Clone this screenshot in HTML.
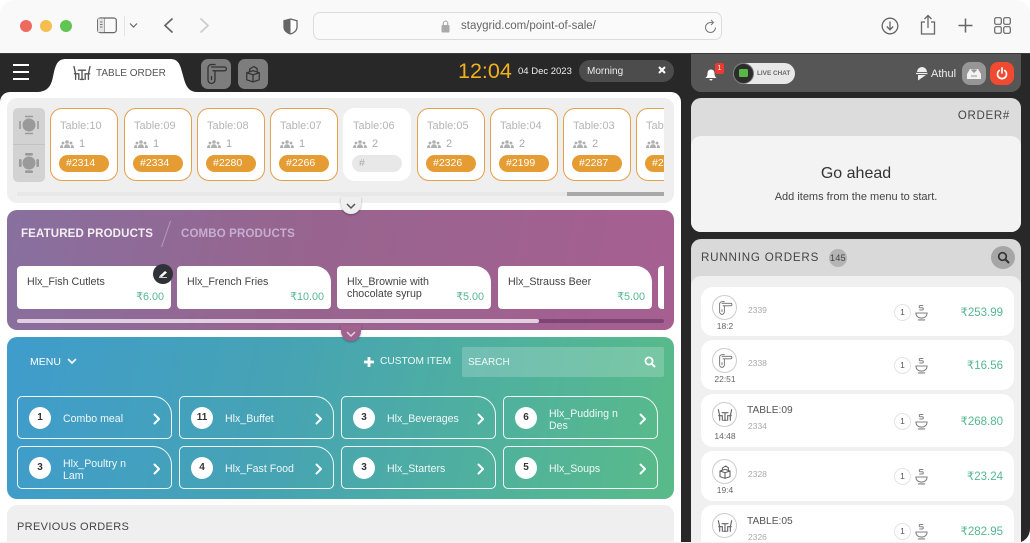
<!DOCTYPE html>
<html><head><meta charset="utf-8"><title>StayGrid POS</title>
<style>
*{box-sizing:border-box;margin:0;padding:0}
html,body{width:1030px;height:543px;overflow:hidden;background:#fff}
body{font-family:"Liberation Sans",sans-serif;position:relative;color:#333}
.a{position:absolute}
.t{position:absolute;white-space:nowrap}
.card{position:absolute;top:108px;width:68px;height:73px;background:#fff;border:1px solid #e4a04a;border-radius:12px}
.card.off{border-color:#fff}
.card .n{position:absolute;left:9px;top:11px;font-size:11px;color:#b5b5b5}
.card .c{position:absolute;left:28px;top:29px;font-size:11px;color:#aaa}
.card svg{position:absolute;left:9px;top:31px}
.card .p{position:absolute;left:8px;top:46px;width:50px;height:17px;border-radius:9px;background:#e59c33;color:#fff;font-size:10.5px;line-height:17px;padding-left:7px}
.card.off .p{background:#e8e8e8;color:#aaa}
.pc{position:absolute;top:266px;height:43px;width:154px;background:#fff;border-radius:4px 16px 4px 4px;font-size:10.7px;color:#444;line-height:12px}
.pc span{position:absolute;left:10px;top:10px}
.pc b{position:absolute;right:7px;top:25px;font-weight:400;font-size:10.8px;color:#55b791}
.m{position:absolute;width:155px;height:43px;border:1.5px solid #f0faf8;border-radius:5px 19px 5px 5px;color:#eef;font-size:10.6px;line-height:12px}
.m i{position:absolute;left:11px;top:10px;width:22px;height:22px;border-radius:50%;background:#fff;color:#333;font:700 10px/22px "Liberation Sans",sans-serif;text-align:center}
.m span{position:absolute;left:45px;top:16px;color:#f0f8f8;white-space:nowrap}
.m span.two{top:10.500px}
.m svg{position:absolute;right:10px;top:16px}
.row{position:absolute;left:701px;width:313px;background:#fff;border-radius:12px}
.row .ic{position:absolute;left:11px;top:8px;width:25px;height:25px;border:1px solid #ccc;border-radius:50%;background:#fff}
.row .ic svg{position:absolute;left:4px;top:4px}
.row .tm{position:absolute;left:0;width:48px;text-align:center;top:34px;font-size:8.5px;color:#666}
.row .id{position:absolute;left:47px;font-size:8.5px;color:#aaa}
.row .nm{position:absolute;left:46px;font-size:10.2px;color:#555}
.row .q{position:absolute;left:193px;width:17px;height:17px;border:1px solid #e4e4e4;border-radius:50%;font-size:8.5px;line-height:15px;text-align:center;color:#555}
.row .bw{position:absolute;left:214px}
.row .pr{position:absolute;right:11px;font-size:11.500px;color:#55b791}
</style></head><body>
<svg width="0" height="0" style="position:absolute">
<defs>
<symbol id="door" viewBox="0 0 24 24"><g fill="none" stroke="currentColor" stroke-width="1.300" stroke-linecap="round" stroke-linejoin="round"><path d="M4 6a3.500 3.500 0 0 1 3.500-3.500H11M4 6v12a3.500 3.500 0 0 0 7 0V9"/><path d="M7.500 5h13a1.800 1.800 0 0 1 0 3.800H9"/><path d="M7.500 14.500v3"/></g></symbol>
<symbol id="table" viewBox="0 0 24 20"><g fill="none" stroke="currentColor" stroke-width="1.700" stroke-linecap="round"><path d="M2 2l2 9v7M2.500 11H8v7"/><path d="M22 2l-2 9v7M21.500 11H16v7"/><path d="M7.500 6.500h9M12 6.500V18M10 18h4"/></g></symbol>
<symbol id="box" viewBox="0 0 24 24"><g fill="none" stroke="currentColor" stroke-width="1.500" stroke-linejoin="round"><path d="M4.500 10.500L12 8l7.500 2.500V19L12 21.500 4.500 19z"/><path d="M4.500 10.500L12 13l7.500-2.500M12 13v8.500"/><path d="M8 9V6l5-3 4 2.500V9.500"/></g></symbol>
<symbol id="bowl" viewBox="0 0 14 18"><g fill="none" stroke="#808080" stroke-width="1.100" stroke-linecap="round"><path d="M1 9.500h12c0 3.500-2.500 5.500-6 5.500S1 13 1 9.500z"/><path d="M3.500 17h7"/><path d="M8.500 1.500H5.500c-1.200 0-1.200 2.400 0 2.400h2.500c1.200 0 1.200 2.400 0 2.400H5"/></g></symbol>
<symbol id="ppl" viewBox="0 0 14 8"><g fill="#b0b0b0"><circle cx="7" cy="2" r="1.800"/><circle cx="3" cy="3" r="1.400"/><circle cx="11" cy="3" r="1.400"/><path d="M4 8c0-2.500 1-3.800 3-3.800S10 5.500 10 8zM0 8c0-2 1-3.200 2.500-3.200L3.500 8zM14 8c0-2-1-3.200-2.500-3.200L10.500 8z"/></g></symbol>
<symbol id="chev" viewBox="0 0 8 12"><path d="M1.500 1.500L6 6l-4.500 4.500" fill="none" stroke="#fff" stroke-width="2" stroke-linecap="round" stroke-linejoin="round"/></symbol>
</defs></svg>

<!-- browser chrome -->
<div class="a" style="left:0;top:0;width:1030px;height:54px;background:#f9f9f9;border-radius:14px 14px 0 0"></div>
<div class="a" style="left:20px;top:20px;width:12px;height:12px;border-radius:50%;background:#ec6a5e"></div>
<div class="a" style="left:40px;top:20px;width:12px;height:12px;border-radius:50%;background:#f4bf4f"></div>
<div class="a" style="left:60px;top:20px;width:12px;height:12px;border-radius:50%;background:#61c554"></div>
<svg class="a" style="left:97px;top:17px" width="20" height="17" viewBox="0 0 20 17"><rect x=".7" y="1" width="18.600" height="14.600" rx="2.500" fill="none" stroke="#666" stroke-width="1.200"/><path d="M7 1v14.600" stroke="#666" stroke-width="1.200"/><rect x="1" y="1.500" width="6" height="13.600" fill="#e4e4e4"/><path d="M3 5h2.500M3 7.500h2.500M3 10h2.500" stroke="#777"/></svg>
<div class="a" style="left:124px;top:16px;width:1px;height:20px;background:#e4e4e4"></div>
<svg class="a" style="left:129px;top:22px" width="9" height="7"><path d="M1 1.500l3.500 3.500L8 1.500" fill="none" stroke="#666" stroke-width="1.200"/></svg>
<svg class="a" style="left:163px;top:17px" width="11" height="17"><path d="M9.500 1.500L2 8.500l7.500 7" fill="none" stroke="#666" stroke-width="1.700"/></svg>
<svg class="a" style="left:199px;top:17px" width="11" height="17"><path d="M1.500 1.500L9 8.500l-7.500 7" fill="none" stroke="#ccc" stroke-width="1.700"/></svg>
<svg class="a" style="left:283px;top:18px" width="15" height="17"><path d="M7.500 1L14 2.800V9c0 3.500-3 6-6.500 7C4 15 1 12.500 1 9V2.800z" fill="#fff" stroke="#666" stroke-width="1.300"/><path d="M7.500 1L1 2.800V9c0 3.500 3 6 6.500 7z" fill="#666"/></svg>
<div class="a" style="left:313px;top:12px;width:409px;height:28px;background:#fafafa;border:1px solid #dcdcdc;border-radius:7px"></div>
<svg class="a" style="left:441px;top:20px" width="9" height="13"><rect x="0.500" y="5" width="8" height="7.500" rx="1" fill="#aaa"/><path d="M2.300 5V3.300a2.200 2.200 0 0 1 4.400 0V5" fill="none" stroke="#aaa" stroke-width="1.100"/></svg>
<div class="t" style="left:461px;top:20px;font-size:11.500px;color:#666">staygrid.com/point-of-sale/</div>
<svg class="a" style="left:704px;top:19px" width="13" height="15"><path d="M11.500 8.500a5 5 0 1 1-5-5h2" fill="none" stroke="#777" stroke-width="1"/><path d="M7 1l2.500 2.500L7 6" fill="none" stroke="#777" stroke-width="1"/></svg>
<svg class="a" style="left:881px;top:17px" width="18" height="18"><circle cx="9" cy="9" r="7.800" fill="none" stroke="#666" stroke-width="1.300"/><path d="M9 4.500v8M5.800 9.500L9 12.800l3.200-3.300" fill="none" stroke="#666" stroke-width="1.300"/></svg>
<svg class="a" style="left:920px;top:14px" width="16" height="21"><path d="M5 8H1.500v12h13V8H11M8 14V1.500M4.500 5L8 1.500 11.500 5" fill="none" stroke="#666" stroke-width="1.300"/></svg>
<svg class="a" style="left:958px;top:18px" width="15" height="15"><path d="M7.500 .5v14M.5 7.500h14" stroke="#666" stroke-width="1.500"/></svg>
<svg class="a" style="left:994px;top:17px" width="17" height="17" fill="none" stroke="#666" stroke-width="1.200"><rect x=".7" y=".7" width="6.600" height="6.600" rx="1.500"/><rect x="9.700" y=".7" width="6.600" height="6.600" rx="1.500"/><rect x=".7" y="9.700" width="6.600" height="6.600" rx="1.500"/><rect x="9.700" y="9.700" width="6.600" height="6.600" rx="1.500"/></svg>

<!-- dark app bg -->
<div class="a" style="left:0;top:53px;width:1030px;height:490px;background:#282828;border-radius:0 0 14px 0"></div>
<div class="a" style="left:0;top:53px;width:1030px;height:1px;background:#3a3a3a"></div>

<!-- left white panel + tab -->
<div class="a" style="left:0;top:92px;width:681px;height:451px;background:#fff;border-radius:10px 10px 0 0"></div>
<svg class="a" style="left:30px;top:58px" width="170" height="36"><path d="M8 34C22 33 22 22 24 14 26 6 28 1 36 1H140c8 0 10 5 12 13 3 10 4 19 14 20z" fill="#fff"/></svg>
<div class="a" style="left:13px;top:64px;width:16px;height:2px;background:#fff"></div>
<div class="a" style="left:13px;top:71px;width:16px;height:2px;background:#fff"></div>
<div class="a" style="left:13px;top:78px;width:16px;height:2px;background:#fff"></div>
<svg class="a" style="left:72px;top:65px;color:#555" width="20" height="16"><use href="#table" width="20" height="16"/></svg>
<div class="t" style="left:96px;top:68px;font-size:10px;color:#555">TABLE ORDER</div>
<div class="a" style="left:201px;top:59px;width:30px;height:30px;background:#7d7d7d;border-radius:7px"></div>
<svg class="a" style="left:204px;top:62px;color:#333" width="24" height="24"><use href="#door" width="24" height="24"/></svg>
<div class="a" style="left:238px;top:59px;width:30px;height:30px;background:#7d7d7d;border-radius:7px"></div>
<svg class="a" style="left:243px;top:63px;color:#333" width="20" height="22"><use href="#box" width="20" height="22"/></svg>
<div class="t" style="left:458px;top:59px;font-size:21.500px;color:#f2b01e">12:04</div>
<div class="t" style="left:518px;top:66px;font-size:9.500px;color:#eee">04 Dec 2023</div>
<div class="a" style="left:579px;top:60px;width:95px;height:22px;background:#4c4c4c;border-radius:11px"></div>
<div class="t" style="left:587px;top:66px;font-size:10px;color:#eee">Morning</div>
<svg class="a" style="left:658px;top:66px" width="8" height="8"><path d="M1 1l6 6M7 1L1 7" stroke="#fff" stroke-width="2"/></svg>

<!-- tables section -->
<div class="a" style="left:7px;top:98px;width:667px;height:105px;background:#efefef;border-radius:10px"></div>
<div class="a" style="left:13px;top:108px;width:32px;height:74px;background:#d2d2d2;border-radius:5px"></div>
<div class="a" style="left:13px;top:144px;width:32px;height:1px;background:#c2c2c2"></div>
<svg class="a" style="left:17px;top:113px" width="24" height="24"><circle cx="12" cy="12" r="6.500" fill="#9a9a9a"/><g fill="none" stroke="#9a9a9a" stroke-width="1.600"><path d="M8 3.500h8M8 20.500h8M3 8v8M21 8v8"/></g></svg>
<svg class="a" style="left:17px;top:151px" width="24" height="24"><circle cx="12" cy="12" r="6.500" fill="#9a9a9a"/><g fill="#9a9a9a"><rect x="8" y="2" width="8" height="2.600" rx="1.300"/><rect x="8" y="19.400" width="8" height="2.600" rx="1.300"/><rect x="2" y="8" width="2.600" height="8" rx="1.300"/><rect x="19.400" y="8" width="2.600" height="8" rx="1.300"/></g></svg>

<div class="a" style="left:0;top:0;width:664px;height:190px;overflow:hidden">
<div class="card" style="left:50px"><div class="n">Table:10</div><svg width="14" height="8"><use href="#ppl"/></svg><div class="c">1</div><div class="p">#2314</div></div>
<div class="card" style="left:124px"><div class="n">Table:09</div><svg width="14" height="8"><use href="#ppl"/></svg><div class="c">1</div><div class="p">#2334</div></div>
<div class="card" style="left:197px"><div class="n">Table:08</div><svg width="14" height="8"><use href="#ppl"/></svg><div class="c">1</div><div class="p">#2280</div></div>
<div class="card" style="left:270px"><div class="n">Table:07</div><svg width="14" height="8"><use href="#ppl"/></svg><div class="c">1</div><div class="p">#2266</div></div>
<div class="card off" style="left:343px"><div class="n">Table:06</div><svg width="14" height="8"><use href="#ppl"/></svg><div class="c">2</div><div class="p">#</div></div>
<div class="card" style="left:417px"><div class="n">Table:05</div><svg width="14" height="8"><use href="#ppl"/></svg><div class="c">2</div><div class="p">#2326</div></div>
<div class="card" style="left:490px"><div class="n">Table:04</div><svg width="14" height="8"><use href="#ppl"/></svg><div class="c">2</div><div class="p">#2199</div></div>
<div class="card" style="left:563px"><div class="n">Table:03</div><svg width="14" height="8"><use href="#ppl"/></svg><div class="c">2</div><div class="p">#2287</div></div>
<div class="card" style="left:636px"><div class="n">Table:02</div><svg width="14" height="8"><use href="#ppl"/></svg><div class="c">2</div><div class="p">#2291</div></div>
</div>
<div class="a" style="left:17px;top:192px;width:647px;height:4px;background:#e8e8e8"></div>
<div class="a" style="left:567px;top:192px;width:97px;height:4px;background:#a8a8a8"></div>

<!-- featured -->
<div class="a" style="left:7px;top:210px;width:667px;height:120px;border-radius:10px;background:linear-gradient(100deg,#88709f 0%,#96658f 40%,#a65f90 100%)"></div>
<div class="t" style="left:21px;top:228px;font-size:11.500px;font-weight:700;color:#f4eef4;letter-spacing:.15px">FEATURED PRODUCTS</div>
<svg class="a" style="left:160px;top:220px" width="12" height="28"><path d="M10.500 1L1.500 27" stroke="#b49cba" stroke-width="1"/></svg>
<div class="t" style="left:181px;top:228px;font-size:11.500px;font-weight:700;color:#c6aed0;letter-spacing:.15px">COMBO PRODUCTS</div>
<div class="pc" style="left:17px"><span>Hlx_Fish Cutlets</span><b>₹6.00</b></div>
<div class="pc" style="left:177px"><span>Hlx_French Fries</span><b>₹10.00</b></div>
<div class="pc" style="left:337px"><span>Hlx_Brownie with<br>chocolate syrup</span><b>₹5.00</b></div>
<div class="pc" style="left:498px"><span>Hlx_Strauss Beer</span><b>₹5.00</b></div>
<div class="a" style="left:658px;top:266px;width:6px;height:43px;background:#fff;border-radius:4px 0 0 4px"></div>
<div class="a" style="left:153px;top:264px;width:20px;height:20px;border-radius:50%;background:#2f3238"></div>
<svg class="a" style="left:157px;top:268px" width="12" height="12"><path d="M2 8.500L8 3l2 1.500-5 4.500z" fill="#fff"/><path d="M2 9.500h8" stroke="#ccc"/></svg>
<div class="a" style="left:17px;top:319px;width:647px;height:4px;background:#7d4474;border-radius:2px"></div>
<div class="a" style="left:17px;top:319px;width:522px;height:4px;background:#e2cfe2;border-radius:2px"></div>

<!-- teal -->
<div class="a" style="left:7px;top:337px;width:667px;height:162px;border-radius:10px;background:linear-gradient(102deg,#3f9ccc 0%,#46a3b4 40%,#4fb09f 70%,#59bb88 100%)"></div>
<div class="t" style="left:30px;top:356px;font-size:10.500px;color:#fff">MENU</div>
<svg class="a" style="left:67px;top:358px" width="10" height="7"><path d="M1 1l4 4 4-4" fill="none" stroke="#fff" stroke-width="1.700"/></svg>
<svg class="a" style="left:363px;top:356px" width="12" height="12"><path d="M6 1v10M1 6h10" stroke="#fff" stroke-width="2.800"/></svg>
<div class="t" style="left:380px;top:356px;font-size:10.200px;color:#f0f8f8">CUSTOM ITEM</div>
<div class="a" style="left:462px;top:347px;width:202px;height:30px;background:rgba(255,255,255,.2);border-radius:2px"></div>
<div class="t" style="left:468px;top:357px;font-size:10px;color:#f0f8f8">SEARCH</div>
<svg class="a" style="left:644px;top:356px" width="12" height="12"><circle cx="5" cy="5" r="3.600" fill="none" stroke="#fff" stroke-width="1.800"/><path d="M7.800 7.800L11 11" stroke="#fff" stroke-width="2"/></svg>

<div class="m" style="left:17px;top:396px"><i>1</i><span>Combo meal</span><svg width="8" height="12"><use href="#chev"/></svg></div>
<div class="m" style="left:179px;top:396px"><i>11</i><span>Hlx_Buffet</span><svg width="8" height="12"><use href="#chev"/></svg></div>
<div class="m" style="left:341px;top:396px"><i>3</i><span>Hlx_Beverages</span><svg width="8" height="12"><use href="#chev"/></svg></div>
<div class="m" style="left:503px;top:396px"><i>6</i><span class="two">Hlx_Pudding n<br>Des</span><svg width="8" height="12"><use href="#chev"/></svg></div>
<div class="m" style="left:17px;top:446px"><i>3</i><span class="two">Hlx_Poultry n<br>Lam</span><svg width="8" height="12"><use href="#chev"/></svg></div>
<div class="m" style="left:179px;top:446px"><i>4</i><span>Hlx_Fast Food</span><svg width="8" height="12"><use href="#chev"/></svg></div>
<div class="m" style="left:341px;top:446px"><i>3</i><span>Hlx_Starters</span><svg width="8" height="12"><use href="#chev"/></svg></div>
<div class="m" style="left:503px;top:446px"><i>5</i><span>Hlx_Soups</span><svg width="8" height="12"><use href="#chev"/></svg></div>

<!-- toggles -->
<div class="a" style="left:341px;top:197px;width:20px;height:17px;border-radius:0 0 10px 10px;background:#efefef;box-shadow:0 1px 2px rgba(0,0,0,.3)"></div>
<svg class="a" style="left:346px;top:203px" width="10" height="7"><path d="M1 1l4 4 4-4" fill="none" stroke="#555" stroke-width="1.500"/></svg>
<div class="a" style="left:341px;top:325px;width:20px;height:16px;border-radius:0 0 10px 10px;background:#a0628f;box-shadow:0 1px 2px rgba(0,0,0,.3)"></div>
<svg class="a" style="left:346px;top:331px" width="10" height="7"><path d="M1 1l4 4 4-4" fill="none" stroke="#e6d0e2" stroke-width="1.500"/></svg>

<!-- previous -->
<div class="a" style="left:7px;top:505px;width:667px;height:38px;background:#efefef;border-radius:10px 10px 0 0"></div>
<div class="t" style="left:17px;top:521px;font-size:11px;color:#444;letter-spacing:.35px;line-height:13px">PREVIOUS ORDERS</div>

<!-- right top bar -->
<div class="a" style="left:691px;top:54px;width:330px;height:38px;background:#565656;border-radius:0 0 10px 10px"></div>
<svg class="a" style="left:705px;top:69px" width="12" height="12"><path d="M6 0.500c-2.500 0-3.500 2-3.500 4 0 2.500-1 3.500-2 4.500h11c-1-1-2-2-2-4.500 0-2-1-4-3.500-4zM4.500 10h3a1.500 1.500 0 0 1-3 0z" fill="#fff"/></svg>
<div class="a" style="left:715px;top:63px;width:9px;height:11px;background:#ea3a32;border-radius:2px;color:#fff;font-size:7px;line-height:11px;text-align:center">1</div>
<div class="a" style="left:733px;top:63px;width:62px;height:21px;background:#e8e8e8;border-radius:11px"></div>
<div class="a" style="left:733px;top:63px;width:21px;height:21px;background:#2c2c2c;border-radius:50%;border:1px solid #777"></div>
<div class="a" style="left:739px;top:69px;width:9px;height:8px;background:#59b748;border-radius:1.500px"></div>
<div class="t" style="left:757px;top:70px;font-size:6.400px;font-weight:700;color:#666">LIVE CHAT</div>
<svg class="a" style="left:915px;top:65px" width="13" height="17"><path d="M2 7a5 5 0 0 1 10 0z" fill="#eee"/><path d="M1 8.500h11.500" stroke="#eee" stroke-width="1.200"/><path d="M3 10h8L3 15.500z" fill="#eee"/></svg>
<div class="t" style="left:931px;top:68px;font-size:11px;color:#eee">Athul</div>
<div class="a" style="left:962px;top:62px;width:24px;height:23px;background:#969696;border-radius:8px"></div>
<svg class="a" style="left:966px;top:65px" width="16" height="16"><path d="M1 9l3-5h8l3 5v5H1z" fill="#f2f2f2"/><path d="M8 1v6M5.500 4.500L8 7l2.500-2.500" stroke="#969696" stroke-width="1.500" fill="none"/><path d="M5 11h6" stroke="#969696"/></svg>
<div class="a" style="left:990px;top:62px;width:24px;height:23px;background:#f04a30;border-radius:8px"></div>
<svg class="a" style="left:996px;top:67px" width="12" height="13"><path d="M3.300 3.500a4.500 4.500 0 1 0 5.400 0M6 1v5" fill="none" stroke="#fff" stroke-width="1.700" stroke-linecap="round"/></svg>

<!-- order panel -->
<div class="a" style="left:691px;top:98px;width:330px;height:134px;background:#dcdcdc;border-radius:10px"></div>
<div class="a" style="left:691px;top:136px;width:330px;height:96px;background:#f3f3f3;border-radius:10px"></div>
<div class="t" style="right:20px;top:110px;font-size:11.500px;color:#444;letter-spacing:.7px">ORDER#</div>
<div class="t" style="left:691px;width:330px;text-align:center;top:165px;font-size:16px;color:#333">Go ahead</div>
<div class="t" style="left:691px;width:330px;text-align:center;top:191px;font-size:11px;color:#444">Add items from the menu to start.</div>

<!-- running orders -->
<div class="a" style="left:691px;top:239px;width:330px;height:304px;background:#d9d9d9;border-radius:10px 10px 0 0"></div>
<div class="a" style="left:691px;top:276px;width:330px;height:267px;background:#f0f0f0;border-radius:10px 10px 0 0"></div>
<div class="t" style="left:701px;top:251px;font-size:11.600px;color:#444;letter-spacing:.8px">RUNNING ORDERS</div>
<div class="a" style="left:829px;top:249px;width:18px;height:18px;background:#b4b4b4;border-radius:50%;font-size:9px;line-height:18px;text-align:center;color:#444;letter-spacing:.3px">145</div>
<div class="a" style="left:991px;top:246px;width:24px;height:23px;background:#a6a6a6;border-radius:50%"></div>
<svg class="a" style="left:997px;top:251px" width="13" height="13"><circle cx="5.500" cy="5.500" r="3.800" fill="none" stroke="#333" stroke-width="1.700"/><path d="M8.500 8.500L12 12" stroke="#333" stroke-width="2"/></svg>

<div class="row" style="top:287px;height:49px"><div class="ic"><svg width="16" height="16" style="color:#666"><use href="#door" width="16" height="16"/></svg></div><div class="tm">18:2</div><div class="id" style="top:18px">2339</div><div class="q" style="top:17px">1</div><svg class="bw" style="top:17px" width="13" height="17"><use href="#bowl" width="13" height="17"/></svg><div class="pr" style="top:18px">₹253.99</div></div>
<div class="row" style="top:340px;height:50px"><div class="ic"><svg width="16" height="16" style="color:#666"><use href="#door" width="16" height="16"/></svg></div><div class="tm">22:51</div><div class="id" style="top:18px">2338</div><div class="q" style="top:17px">1</div><svg class="bw" style="top:17px" width="13" height="17"><use href="#bowl" width="13" height="17"/></svg><div class="pr" style="top:18px">₹16.56</div></div>
<div class="row" style="top:394px;height:53px"><div class="ic"><svg width="16" height="16" style="color:#666"><use href="#table" width="16" height="16"/></svg></div><div class="tm" style="top:37px">14:48</div><div class="nm" style="top:11px">TABLE:09</div><div class="id" style="top:27px">2334</div><div class="q" style="top:19px">1</div><svg class="bw" style="top:19px" width="13" height="17"><use href="#bowl" width="13" height="17"/></svg><div class="pr" style="top:20px">₹268.80</div></div>
<div class="row" style="top:451px;height:50px"><div class="ic"><svg width="16" height="16" style="color:#555"><use href="#box" width="16" height="16"/></svg></div><div class="tm">19:4</div><div class="id" style="top:18px">2328</div><div class="q" style="top:17px">1</div><svg class="bw" style="top:17px" width="13" height="17"><use href="#bowl" width="13" height="17"/></svg><div class="pr" style="top:18px">₹23.24</div></div>
<div class="row" style="top:505px;height:38px;border-radius:12px 12px 0 0;overflow:hidden"><div class="ic"><svg width="16" height="16" style="color:#666"><use href="#table" width="16" height="16"/></svg></div><div class="nm" style="top:11px">TABLE:05</div><div class="id" style="top:27px">2326</div><div class="q" style="top:18px">1</div><svg class="bw" style="top:18px" width="13" height="17"><use href="#bowl" width="13" height="17"/></svg><div class="pr" style="top:19px">₹282.95</div></div>
<div class="a" style="left:0;top:542px;width:1021px;height:1px;background:#f4f4f4"></div>
</body></html>
